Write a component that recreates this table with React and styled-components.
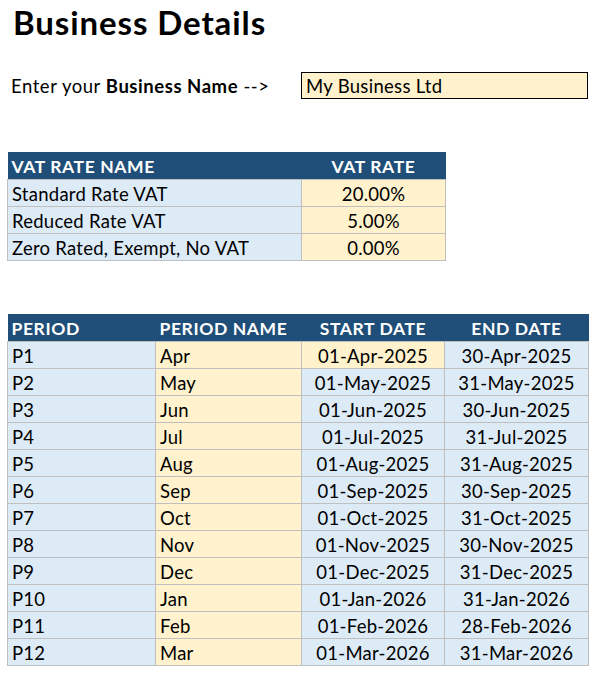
import React from "react";
import styled, { createGlobalStyle } from "styled-components";

const GlobalStyle = createGlobalStyle`
  body {
    margin: 0;
    background: #ffffff;
    font-family: Lato, "Open Sans", sans-serif;
    color: #000000;
  }
`;

const Page = styled.div`
  width: 598px;
  padding: 0 0 0 7px;
  box-sizing: border-box;
`;

const Title = styled.h1`
  margin: 0;
  padding: 2px 0 0 6px;
  height: 42px;
  font-size: 33px;
  font-weight: 700;
  line-height: 40px;
  letter-spacing: 0.9px;
`;

const FormRow = styled.div`
  display: grid;
  grid-template-columns: 294px 287px;
  align-items: center;
  margin-top: 28px;
  height: 27px;
`;

const Label = styled.div`
  padding-left: 4px;
  font-size: 18.5px;
  letter-spacing: 0.55px;
  white-space: nowrap;

  b {
    font-weight: 700;
  }
`;

const NameBox = styled.div`
  height: 27px;
  box-sizing: border-box;
  border: 1px solid #000000;
  background: #fff2cc;
  padding: 0 4px;
  font-size: 18.5px;
  letter-spacing: 0.3px;
  line-height: 27px;
`;

const Table = styled.table`
  border-collapse: collapse;
  table-layout: fixed;
  width: ${(p) => p.$width}px;
  margin-top: ${(p) => p.$top}px;
`;

const HeadCell = styled.th`
  background: #1f4e78;
  color: #ffffff;
  font-weight: 700;
  font-size: 17.5px;
  letter-spacing: 0.6px;
  height: 27px;
  padding: 2px 4px 0;
  box-sizing: border-box;
  line-height: 25px;
  text-align: ${(p) => (p.$center ? "center" : "left")};
  white-space: nowrap;
`;

const Cell = styled.td`
  background: ${(p) => (p.$yellow ? "#fff2cc" : "#ddebf7")};
  border: 1px solid #bfbfbf;
  height: 27px;
  padding: 2px 4px 0;
  box-sizing: border-box;
  font-size: 18.5px;
  letter-spacing: 0.25px;
  line-height: 24px;
  text-align: ${(p) => (p.$center ? "center" : "left")};
  white-space: nowrap;
`;

const vatRates = [
  ["Standard Rate VAT", "20.00%"],
  ["Reduced Rate VAT", "5.00%"],
  ["Zero Rated, Exempt, No VAT", "0.00%"],
];

const periods = [
  ["P1", "Apr", "01-Apr-2025", "30-Apr-2025"],
  ["P2", "May", "01-May-2025", "31-May-2025"],
  ["P3", "Jun", "01-Jun-2025", "30-Jun-2025"],
  ["P4", "Jul", "01-Jul-2025", "31-Jul-2025"],
  ["P5", "Aug", "01-Aug-2025", "31-Aug-2025"],
  ["P6", "Sep", "01-Sep-2025", "30-Sep-2025"],
  ["P7", "Oct", "01-Oct-2025", "31-Oct-2025"],
  ["P8", "Nov", "01-Nov-2025", "30-Nov-2025"],
  ["P9", "Dec", "01-Dec-2025", "31-Dec-2025"],
  ["P10", "Jan", "01-Jan-2026", "31-Jan-2026"],
  ["P11", "Feb", "01-Feb-2026", "28-Feb-2026"],
  ["P12", "Mar", "01-Mar-2026", "31-Mar-2026"],
];

const App = () => {
  return (
    <Page>
      <GlobalStyle />
      <Title>Business Details</Title>

      <FormRow>
        <Label>
          Enter your <b>Business Name</b> --&gt;
        </Label>
        <NameBox>My Business Ltd</NameBox>
      </FormRow>

      <Table $width={438} $top={53}>
        <colgroup>
          <col style={{ width: 294 }} />
          <col style={{ width: 144 }} />
        </colgroup>
        <thead>
          <tr>
            <HeadCell>VAT RATE NAME</HeadCell>
            <HeadCell $center>VAT RATE</HeadCell>
          </tr>
        </thead>
        <tbody>
          {vatRates.map(([name, rate]) => (
            <tr key={name}>
              <Cell>{name}</Cell>
              <Cell $yellow $center>
                {rate}
              </Cell>
            </tr>
          ))}
        </tbody>
      </Table>

      <Table $width={581} $top={53}>
        <colgroup>
          <col style={{ width: 148 }} />
          <col style={{ width: 146 }} />
          <col style={{ width: 143 }} />
          <col style={{ width: 144 }} />
        </colgroup>
        <thead>
          <tr>
            <HeadCell>PERIOD</HeadCell>
            <HeadCell>PERIOD NAME</HeadCell>
            <HeadCell $center>START DATE</HeadCell>
            <HeadCell $center>END DATE</HeadCell>
          </tr>
        </thead>
        <tbody>
          {periods.map(([code, name, start, end], i) => (
            <tr key={code}>
              <Cell>{code}</Cell>
              <Cell $yellow>{name}</Cell>
              <Cell $yellow={i === 0} $center>
                {start}
              </Cell>
              <Cell $center>{end}</Cell>
            </tr>
          ))}
        </tbody>
      </Table>
    </Page>
  );
};

export default App;
